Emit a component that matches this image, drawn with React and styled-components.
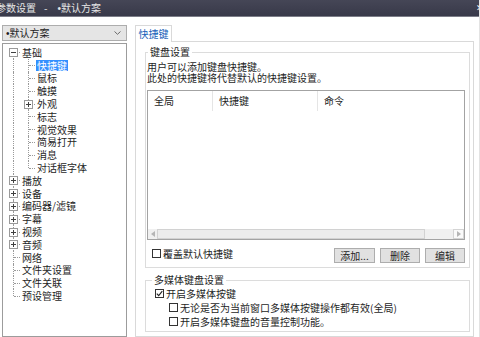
import React from 'react'
import styled, { createGlobalStyle } from 'styled-components'

const GlobalStyle = createGlobalStyle`
  html, body {
    margin: 0;
    padding: 0;
  }
  body {
    width: 480px;
    height: 337px;
    overflow: hidden;
    background: #fff;
    font-family: "Noto Sans CJK SC", "Noto Sans", sans-serif;
    font-size: 10px;
    color: #1e1e1e;
  }
`

const Window = styled.div`
  width: 480px;
  height: 337px;
  box-sizing: border-box;
  border-right: 1px solid #e3e3e3;
  display: flex;
  flex-direction: column;
  overflow: hidden;
`
const TitleBar = styled.div`
  height: 16px;
  flex-shrink: 0;
  display: flex;
  align-items: center;
  justify-content: space-between;
  background: linear-gradient(#454656, #383949);
  border-bottom: 1px solid #7c7d88;
  color: #e6e6e6;
  line-height: 16px;
  white-space: pre;
`
const Title = styled.span`
  margin-left: -4px;
`
const Sep = styled.span`
  padding: 0 10px 0 8px;
`
const Bullet = styled.span`
  font-family: "Liberation Sans", sans-serif;
`
const Close = styled.span`
  margin-right: -5px;
  color: #f4f4f4;
  font-size: 9px;
`
const Body = styled.div`
  flex: 1;
  min-height: 0;
  display: flex;
  padding: 8px 0 0 2px;
`
const LeftCol = styled.div`
  width: 125px;
  display: flex;
  flex-direction: column;
  gap: 2px;
`
const Combo = styled.div`
  height: 16px;
  box-sizing: border-box;
  border: 1px solid #adadad;
  background: #e5e5e5;
  display: flex;
  align-items: center;
  justify-content: space-between;
  padding: 0 5px 0 3px;
  line-height: 14px;
`
const Tree = styled.div`
  flex: 1;
  box-sizing: border-box;
  border: 1px solid #9c9c9c;
  padding: 2px 0 0 3px;
`
const Row = styled.div`
  height: 12.8px;
  display: flex;
  align-items: center;
`
const Cell = styled.span`
  position: relative;
  width: 15px;
  height: 100%;
  flex-shrink: 0;
  &::before {
    content: '';
    position: absolute;
    left: 7px;
    border-left: 1px dotted #9a9a9a;
    top: ${p => (p.$line === 'bottom' ? '50%' : '0')};
    bottom: ${p => (p.$line === 'top' ? '50%' : '0')};
    display: ${p => (p.$line === 'none' ? 'none' : 'block')};
  }
  &::after {
    content: '';
    position: absolute;
    left: 8px;
    top: 50%;
    width: 6px;
    border-top: 1px dotted #9a9a9a;
    display: ${p => (p.$stub ? 'block' : 'none')};
  }
`
const Expander = styled.span`
  position: absolute;
  left: 3px;
  top: calc(50% - 4px);
  width: 9px;
  height: 9px;
  box-sizing: border-box;
  border: 1px solid #9a9a9a;
  background: #fff;
  z-index: 1;
  &::before {
    content: '';
    position: absolute;
    left: 1px;
    right: 1px;
    top: 3px;
    height: 1px;
    background: #404040;
  }
  &::after {
    content: '';
    position: absolute;
    top: 1px;
    bottom: 1px;
    left: 3px;
    width: 1px;
    background: #404040;
    display: ${p => (p.$open ? 'none' : 'block')};
  }
`
const NodeLabel = styled.span`
  padding: 0 1px;
  line-height: 11px;
  white-space: nowrap;
  background: ${p => (p.$selected ? '#3390ff' : 'transparent')};
  color: ${p => (p.$selected ? '#fff' : 'inherit')};
`
const RightCol = styled.div`
  margin-left: 8px;
  width: 339px;
  display: flex;
  flex-direction: column;
`
const TabStrip = styled.div`
  height: 16px;
  display: flex;
`
const Tab = styled.div`
  position: relative;
  z-index: 1;
  width: 37px;
  height: 17px;
  box-sizing: border-box;
  border: 1px solid #d9d9d9;
  border-bottom: none;
  background: #fff;
  color: #1560b8;
  text-align: center;
  line-height: 15px;
`
const Panel = styled.div`
  flex: 1;
  border: 1px solid #d9d9d9;
  padding: 4px 3px 0 9px;
`
const Group = styled.fieldset`
  margin: ${p => p.$mt || 0}px 0 0;
  padding: ${p => p.$pad};
  border: 1px solid #dcdcdc;
  min-width: 0;
`
const Legend = styled.legend`
  padding: 0 2px;
  margin-left: ${p => p.$ml}px;
  line-height: 12px;
`
const Desc = styled.div`
  line-height: 11px;
  white-space: nowrap;
`
const ListView = styled.div`
  margin-top: 7px;
  height: 150px;
  box-sizing: border-box;
  border: 1px solid #a3a3a3;
  display: flex;
  flex-direction: column;
`
const ListHeader = styled.div`
  height: 20px;
  display: flex;
`
const HeaderCell = styled.div`
  width: ${p => (p.$w ? `${p.$w}px` : 'auto')};
  flex: ${p => (p.$w ? '0 0 auto' : '1')};
  box-sizing: border-box;
  padding-left: 6px;
  line-height: 20px;
  border-right: ${p => (p.$w ? '1px solid #e5e5e5' : 'none')};
`
const ListBody = styled.div`
  flex: 1;
`
const HScroll = styled.div`
  height: 10px;
  display: flex;
  background: #f0f0f0;
`
const ScrollArrow = styled.div`
  width: ${p => p.$w}px;
  box-sizing: border-box;
  display: flex;
  align-items: center;
  justify-content: center;
  border: ${p => (p.$boxed ? '1px solid #d4d4d4' : 'none')};
  background: ${p => (p.$boxed ? '#fafafa' : 'transparent')};
`
const Thumb = styled.div`
  width: 268px;
  box-sizing: border-box;
  border: 1px solid #d2d2d2;
  background: #ececec;
`
const Track = styled.div`
  flex: 1;
`
const BottomRow = styled.div`
  margin-top: 8px;
  height: 15px;
  display: flex;
  align-items: flex-start;
`
const CheckRow = styled.label`
  display: flex;
  align-items: center;
  gap: 2px;
  height: ${p => p.$h}px;
  margin-left: ${p => p.$ml}px;
  line-height: 11px;
  white-space: nowrap;
`
const Box = styled.span`
  width: 9px;
  height: 9px;
  box-sizing: border-box;
  border: 1px solid #333;
  background: #fff;
  display: flex;
  align-items: center;
  justify-content: center;
  flex-shrink: 0;
`
const Buttons = styled.div`
  margin-left: auto;
  display: flex;
  gap: 5px;
`
const Button = styled.button`
  width: ${p => p.$w}px;
  height: 15px;
  padding: 0;
  box-sizing: border-box;
  border: 1px solid #adadad;
  background: #e1e1e1;
  font-family: inherit;
  font-size: 10px;
  line-height: 13px;
  color: #1e1e1e;
`

const roots = [
  {
    label: '基础',
    open: true,
    children: [
      { label: '快捷键', selected: true },
      { label: '鼠标' },
      { label: '触摸' },
      { label: '外观', more: true },
      { label: '标志' },
      { label: '视觉效果' },
      { label: '简易打开' },
      { label: '消息' },
      { label: '对话框字体' }
    ]
  },
  { label: '播放', more: true },
  { label: '设备', more: true },
  { label: '编码器/滤镜', more: true },
  { label: '字幕', more: true },
  { label: '视频', more: true },
  { label: '音频', more: true },
  { label: '网络' },
  { label: '文件夹设置' },
  { label: '文件关联' },
  { label: '预设管理' }
]

const Check = ({ checked }) => (
  <Box>
    {checked && (
      <svg width="7" height="7" viewBox="0 0 7 7">
        <polyline points="0.8,3.6 2.7,5.6 6.3,1.2" fill="none" stroke="#222" strokeWidth="1.1" />
      </svg>
    )}
  </Box>
)

const Arrow = ({ dir }) => (
  <svg width="4" height="6" viewBox="0 0 4 6">
    <polygon points={dir === 'left' ? '4,0 0,3 4,6' : '0,0 4,3 0,6'} fill="#b5b5b5" />
  </svg>
)

const TreeView = () => {
  const rows = []
  roots.forEach((root, i) => {
    const last = i === roots.length - 1
    const line = i === 0 ? 'bottom' : last ? 'top' : 'full'
    rows.push(
      <Row key={root.label}>
        <Cell $line={line} $stub>
          {(root.open || root.more) && <Expander $open={root.open} />}
        </Cell>
        <NodeLabel>{root.label}</NodeLabel>
      </Row>
    )
    if (root.open) {
      root.children.forEach((child, j) => {
        const childLast = j === root.children.length - 1
        rows.push(
          <Row key={child.label}>
            <Cell $line={last ? 'none' : 'full'} />
            <Cell $line={childLast ? 'top' : 'full'} $stub>
              {child.more && <Expander />}
            </Cell>
            <NodeLabel $selected={child.selected}>{child.label}</NodeLabel>
          </Row>
        )
      })
    }
  })
  return <Tree>{rows}</Tree>
}

const App = () => {
  return (
    <Window>
      <GlobalStyle />
      <TitleBar>
        <Title>
          参数设置<Sep>-</Sep>
          <Bullet>•</Bullet>默认方案
        </Title>
        <Close>✕</Close>
      </TitleBar>
      <Body>
        <LeftCol>
          <Combo>
            <span>
              <Bullet>•</Bullet>默认方案
            </span>
            <svg width="7" height="4" viewBox="0 0 7 4">
              <polyline points="0.5,0.5 3.5,3.3 6.5,0.5" fill="none" stroke="#6a6a6a" strokeWidth="1" />
            </svg>
          </Combo>
          <TreeView />
        </LeftCol>
        <RightCol>
          <TabStrip>
            <Tab>快捷键</Tab>
          </TabStrip>
          <Panel>
            <Group $pad="3px 4px 4px 1px">
              <Legend $ml={1}>键盘设置</Legend>
              <Desc>用户可以添加键盘快捷键。</Desc>
              <Desc>此处的快捷键将代替默认的快捷键设置。</Desc>
              <ListView>
                <ListHeader>
                  <HeaderCell $w={65}>全局</HeaderCell>
                  <HeaderCell $w={105}>快捷键</HeaderCell>
                  <HeaderCell>命令</HeaderCell>
                </ListHeader>
                <ListBody />
                <HScroll>
                  <ScrollArrow $w={9}>
                    <Arrow dir="left" />
                  </ScrollArrow>
                  <Thumb />
                  <Track />
                  <ScrollArrow $w={11} $boxed>
                    <Arrow dir="right" />
                  </ScrollArrow>
                </HScroll>
              </ListView>
              <BottomRow>
                <CheckRow $h={11} $ml={5}>
                  <Check />
                  覆盖默认快捷键
                </CheckRow>
                <Buttons>
                  <Button $w={41}>添加...</Button>
                  <Button $w={40}>删除</Button>
                  <Button $w={40}>编辑</Button>
                </Buttons>
              </BottomRow>
            </Group>
            <Group $mt={6} $pad="0 4px 3px 9px">
              <Legend $ml={-3}>多媒体键盘设置</Legend>
              <CheckRow $h={14} $ml={0}>
                <Check checked />
                开启多媒体按键
              </CheckRow>
              <CheckRow $h={14} $ml={14}>
                <Check />
                无论是否为当前窗口多媒体按键操作都有效(全局)
              </CheckRow>
              <CheckRow $h={14} $ml={14}>
                <Check />
                开启多媒体键盘的音量控制功能。
              </CheckRow>
            </Group>
          </Panel>
        </RightCol>
      </Body>
    </Window>
  )
}

export default App
